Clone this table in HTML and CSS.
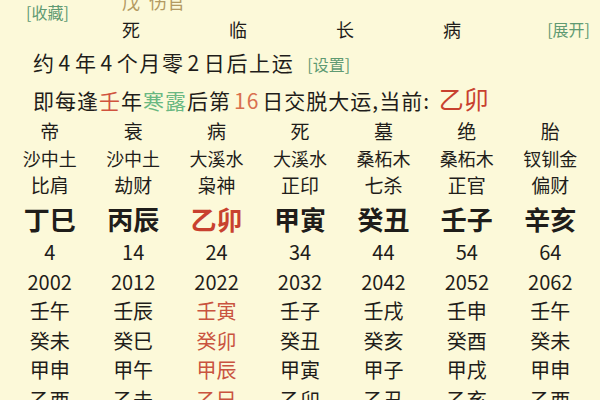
FILE: index.html
```html
<!DOCTYPE html>
<html lang="zh">
<head>
<meta charset="utf-8">
<link rel="stylesheet" href="styles.css">
</head>
<body>
<div class="page">
  <div class="head">
    <span class="link fav">[收藏]</span>
    <span class="shishen c1">戊<span class="gap"></span>伤官</span>
    <span class="hd c1">死</span>
    <span class="hd c2">临</span>
    <span class="hd c3">长</span>
    <span class="hd c4">病</span>
    <span class="link expand">[展开]</span>
  </div>
  <div class="info">
    <div class="line l1">约<span class="num">4</span>年<span class="num">4</span>个月零<span class="num">2</span>日后上运<span class="link set">[设置]</span></div>
    <div class="line">即每逢<span class="red">壬</span>年<span class="green">寒露</span>后第<span class="num orange">16</span>日交脱大运,当前: <span class="cur">乙卯</span></div>
  </div>
  <div class="table">
    <div class="row r-state"><span>帝</span><span>衰</span><span>病</span><span>死</span><span>墓</span><span>绝</span><span>胎</span></div>
    <div class="row r-nayin"><span>沙中土</span><span>沙中土</span><span>大溪水</span><span>大溪水</span><span>桑柘木</span><span>桑柘木</span><span>钗钏金</span></div>
    <div class="row r-god"><span>比肩</span><span>劫财</span><span>枭神</span><span>正印</span><span>七杀</span><span>正官</span><span>偏财</span></div>
    <div class="row r-pillar"><span>丁巳</span><span>丙辰</span><span class="hot">乙卯</span><span>甲寅</span><span>癸丑</span><span>壬子</span><span>辛亥</span></div>
    <div class="row r-low"><span>4</span><span>14</span><span>24</span><span>34</span><span>44</span><span>54</span><span>64</span></div>
    <div class="row r-low"><span>2002</span><span>2012</span><span>2022</span><span>2032</span><span>2042</span><span>2052</span><span>2062</span></div>
    <div class="row r-low"><span>壬午</span><span>壬辰</span><span class="soft">壬寅</span><span>壬子</span><span>壬戌</span><span>壬申</span><span>壬午</span></div>
    <div class="row r-low"><span>癸未</span><span>癸巳</span><span class="soft">癸卯</span><span>癸丑</span><span>癸亥</span><span>癸酉</span><span>癸未</span></div>
    <div class="row r-low"><span>甲申</span><span>甲午</span><span class="soft">甲辰</span><span>甲寅</span><span>甲子</span><span>甲戌</span><span>甲申</span></div>
    <div class="row r-low"><span>乙酉</span><span>乙未</span><span class="soft">乙巳</span><span>乙卯</span><span>乙丑</span><span>乙亥</span><span>乙酉</span></div>
  </div>
</div>
</body>
</html>
```
FILE: styles.css
```css
html, body {
  margin: 0;
  padding: 0;
  background: #fcf9d9;
  overflow: hidden;
}
body {
  width: 600px;
  height: 400px;
  font-family: "Noto Sans CJK SC", "Noto Sans", sans-serif;
  color: #1f1d1a;
}
.page {
  padding: 0 8px;
}
.head {
  display: grid;
  grid-template-columns: 114px repeat(4, 107px) minmax(0, 1fr);
  grid-template-rows: 26px 30px;
  margin-top: -12px;
  align-items: center;
  white-space: nowrap;
}
.link {
  color: #5f9a72;
  font-size: 16px;
  white-space: nowrap;
}
.fav {
  grid-column: 1;
  grid-row: 1 / 3;
  align-self: start;
  margin-left: 18px;
  margin-top: 13px;
  line-height: 22px;
}
.shishen {
  grid-row: 1;
  color: #b39a62;
  font-size: 18px;
}
.gap {
  display: inline-block;
  width: 9px;
}
.hd {
  grid-row: 2;
  font-size: 18px;
}
.c1 { grid-column: 2; }
.c2 { grid-column: 3; }
.c3 { grid-column: 4; }
.c4 { grid-column: 5; }
.expand {
  grid-column: 6;
  grid-row: 2;
  justify-self: end;
  margin-right: 2px;
}
.info {
  padding-left: 25px;
}
.line {
  height: 36px;
  line-height: 36px;
  font-size: 21px;
  letter-spacing: 1px;
  white-space: nowrap;
}
.l1 {
  letter-spacing: 1.6px;
}
.num {
  margin: 0 2px;
}
.l1 .num {
  margin: 0 3px;
}
.set {
  margin-left: 13px;
  letter-spacing: 0;
}
.red { color: #d0533d; }
.green { color: #6ab882; }
.orange { color: #d9704f; margin: 0 3px; }
.cur {
  color: #c8412f;
  font-size: 25px;
  letter-spacing: 0;
  margin-left: 3px;
}
.row {
  display: grid;
  grid-template-columns: repeat(7, 1fr);
  text-align: center;
  white-space: nowrap;
}
.r-state { height: 30px; line-height: 30px; font-size: 19px; }
.r-nayin { height: 24px; line-height: 24px; font-size: 18px; }
.r-god { height: 30px; line-height: 30px; font-size: 19px; }
.r-pillar { height: 37px; line-height: 37px; font-size: 26px; font-weight: bold; }
.r-low { height: 29.5px; line-height: 29.5px; font-size: 20px; }
.hot { color: #c8412f; }
.soft { color: #c9533f; }
```
